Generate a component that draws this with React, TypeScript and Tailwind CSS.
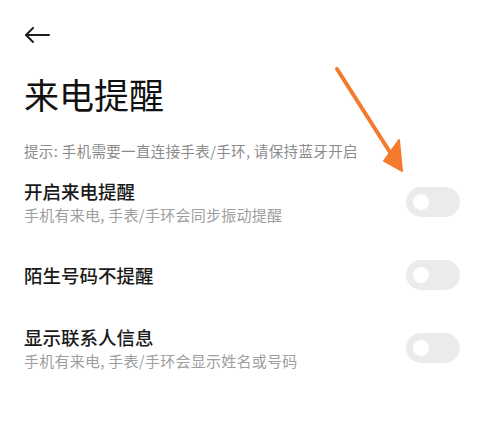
import React from 'react';

const FONT = { fontFamily: '"Noto Sans CJK SC", "Noto Sans", sans-serif' };

const ROWS = [
  { title: '开启来电提醒', sub: '手机有来电, 手表/手环会同步振动提醒' },
  { title: '陌生号码不提醒', sub: '' },
  { title: '显示联系人信息', sub: '手机有来电, 手表/手环会显示姓名或号码' },
];

function Toggle() {
  return (
    <div className="w-[54px] h-[30px] rounded-full bg-[#ebebeb] flex items-center pl-[7px] shrink-0">
      <div className="w-[16px] h-[16px] rounded-full bg-white" />
    </div>
  );
}

export default function App() {
  return (
    <div className="relative w-[488px] h-[430px] bg-white overflow-hidden" style={FONT}>
      <div className="px-[24px]">
        {/* back */}
        <div className="pt-[27px] h-[47px]">
          <svg width="26" height="16" viewBox="0 0 26 16" fill="none" stroke="#1f1f1f" strokeWidth="2" strokeLinecap="round" strokeLinejoin="round">
            <path d="M2 8H25" />
            <path d="M9 1L2 8L9 15" />
          </svg>
        </div>

        <h1 className="mt-[25px] text-[35px] leading-[44px] text-[#111]">来电提醒</h1>

        <p className="mt-[25px] text-[14.5px] leading-[20px] tracking-[0.35px] text-[#8c8c8c]">提示: 手机需要一直连接手表/手环, 请保持蓝牙开启</p>

        <div className="mt-[4px]">
          {ROWS.map((r) => (
            <div key={r.title} className="h-[73px] flex items-center justify-between">
              <div>
                <div className="text-[18.5px] leading-[24px] font-medium text-[#1a1a1a]">{r.title}</div>
                {r.sub && <div className="mt-[2px] text-[15px] leading-[20px] tracking-[0.25px] text-[#9e9e9e]">{r.sub}</div>}
              </div>
              <div className="mr-[4px]">
                <Toggle />
              </div>
            </div>
          ))}
        </div>
      </div>

      {/* annotation arrow */}
      <svg className="absolute left-0 top-0" width="488" height="430" viewBox="0 0 488 430">
        <path d="M337 69L393 157" stroke="#f47a2e" strokeWidth="4" strokeLinecap="round" />
        <path d="M402 171L384 161L399 140Z" fill="#f47a2e" stroke="#f47a2e" strokeWidth="2" strokeLinejoin="round" />
      </svg>
    </div>
  );
}
